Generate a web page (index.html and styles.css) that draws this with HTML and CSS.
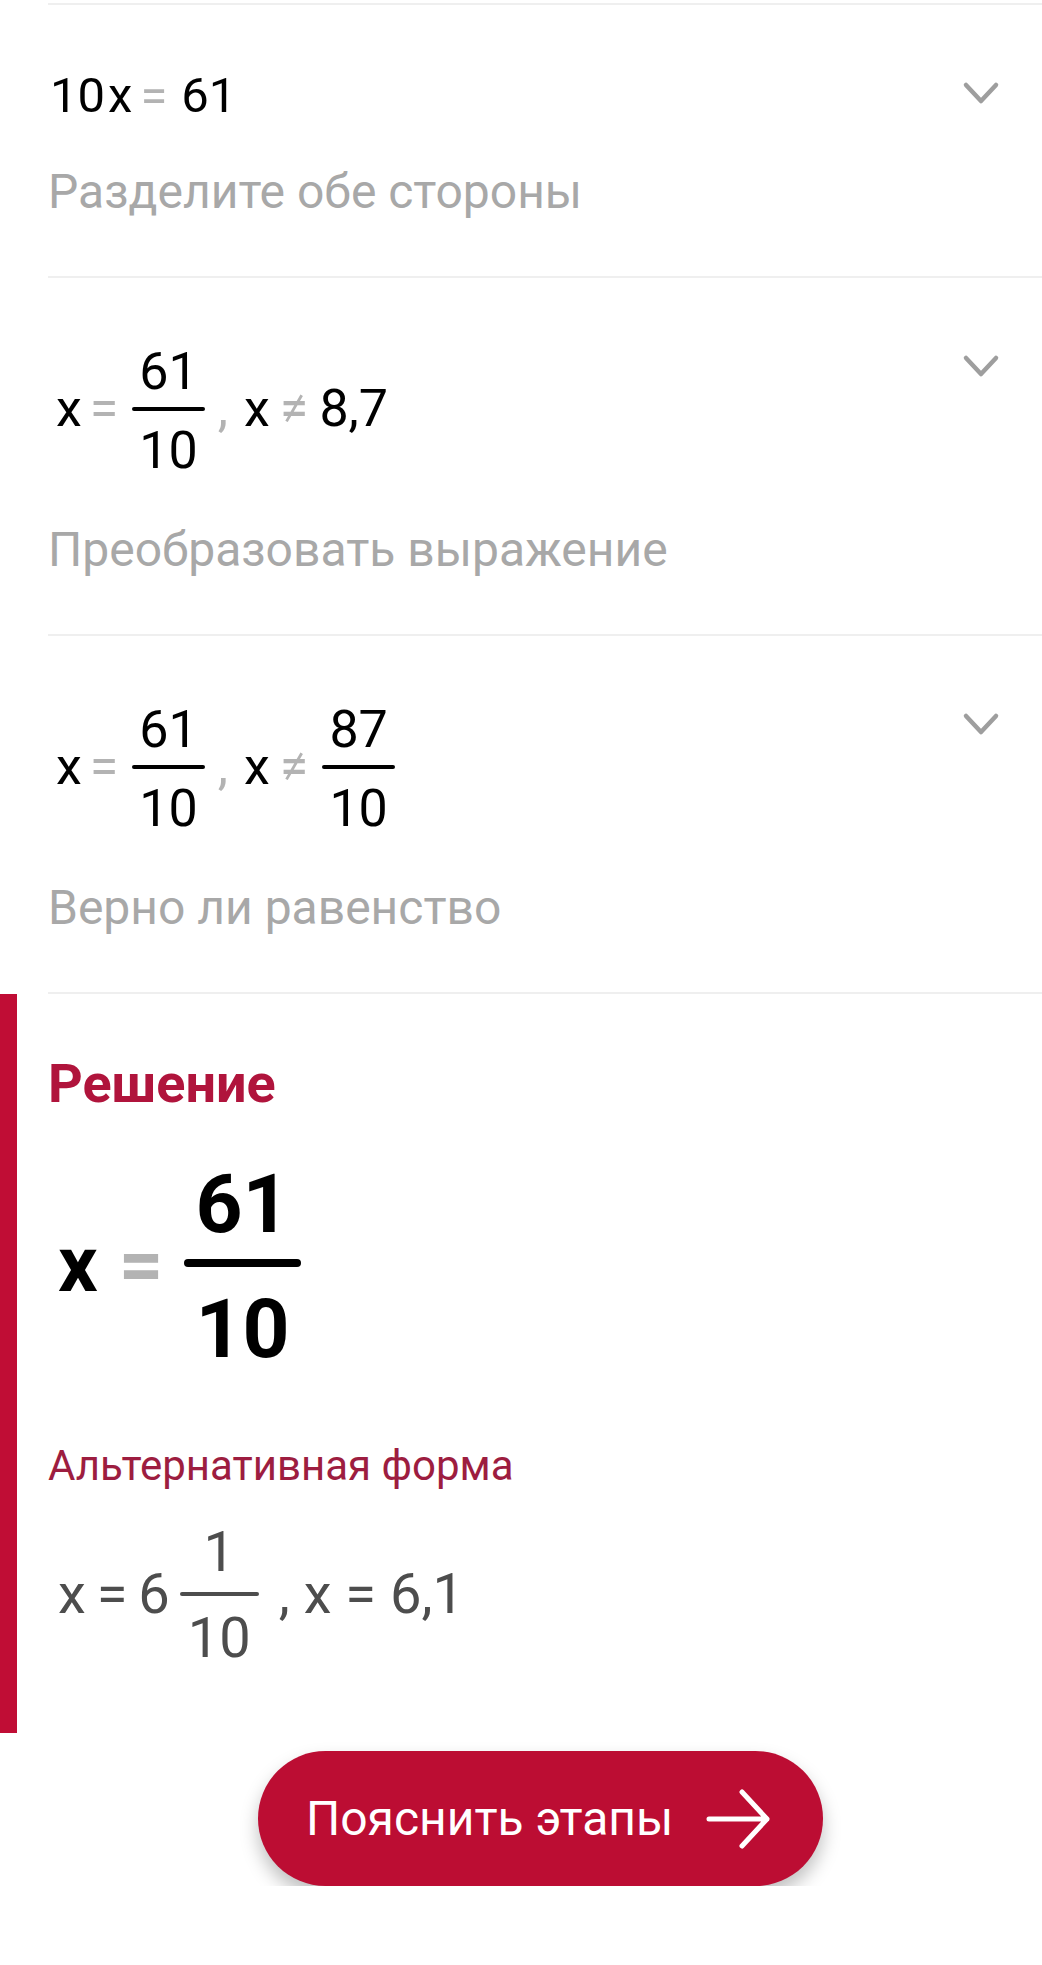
FILE: index.html
```html
<!DOCTYPE html>
<html lang="ru">
<head>
<meta charset="utf-8">
<title>Решение</title>
<link rel="stylesheet" href="styles.css">
</head>
<body>
<div class="page">
  <div class="steps">
    <div class="step">
      <div class="step-head">
        <div class="math math-line"><span class="n10">10</span><span class="var v1">x</span><span class="op op1">=</span><span class="r61">61</span></div>
        <svg class="chev" viewBox="0 0 40 24"><polyline points="6,4 21,20 36,4"/></svg>
      </div>
      <div class="step-label">Разделите обе стороны</div>
    </div>
    <div class="step">
      <div class="step-head">
        <div class="math"><span class="var">x</span><span class="op">=</span><span class="frac"><span class="num">61</span><span class="bar"></span><span class="den">10</span></span><span class="comma">,</span><span class="var v2">x</span><span class="op ne">≠</span><span class="dec">8,7</span></div>
        <svg class="chev" viewBox="0 0 40 24"><polyline points="6,4 21,20 36,4"/></svg>
      </div>
      <div class="step-label">Преобразовать выражение</div>
    </div>
    <div class="step">
      <div class="step-head">
        <div class="math"><span class="var">x</span><span class="op">=</span><span class="frac"><span class="num">61</span><span class="bar"></span><span class="den">10</span></span><span class="comma">,</span><span class="var v2">x</span><span class="op ne">≠</span><span class="frac frac2"><span class="num">87</span><span class="bar"></span><span class="den">10</span></span></div>
        <svg class="chev" viewBox="0 0 40 24"><polyline points="6,4 21,20 36,4"/></svg>
      </div>
      <div class="step-label">Верно ли равенство</div>
    </div>
  </div>

  <section class="solution">
    <h2 class="sol-title">Решение</h2>
    <div class="big-math"><span class="var">x</span><span class="big-op">=</span><span class="big-frac"><span class="big-num">61</span><span class="big-bar"></span><span class="big-den">10</span></span></div>
    <div class="alt-title">Альтернативная форма</div>
    <div class="alt-math"><span class="alt-lead">x = 6</span><span class="alt-frac"><span class="alt-num">1</span><span class="alt-bar"></span><span class="alt-den">10</span></span><span class="alt-rest">, x = 6,1</span></div>
  </section>

  <div class="btn-row">
    <button class="explain" type="button"><span class="explain-text">Пояснить этапы</span><svg class="arrow" viewBox="0 0 64 60"><path d="M3 30 H61 M36 3 L61 30 L36 57"/></svg></button>
  </div>
</div>
</body>
</html>
```

FILE: styles.css
```css
* { box-sizing: border-box; }

body {
  margin: 0;
  background: #ffffff;
  font-family: Roboto, "Noto Sans", "Liberation Sans", sans-serif;
}

.page {
  width: 1042px;
  padding-top: 3px;
}

/* ---------- steps ---------- */
.steps {
  margin-left: 48px;
  border-bottom: 2px solid #efefef;
}

.step {
  border-top: 2px solid #efefef;
  padding: 64px 0 56px;
}

.step-head {
  display: flex;
  justify-content: space-between;
  align-items: flex-start;
  padding-left: 8px;
  padding-right: 42px;
}

.math {
  font-size: 52px;
  line-height: 60px;
  color: #000;
  white-space: nowrap;
}

.math-line {
  font-size: 49px;
  line-height: 54px;
}

.n10 { margin-left: -6px; }
.v1 { margin-left: 3px; }
.op1 { margin: 0 8px 0 12px; }

.op {
  color: #b3b3b3;
  margin: 0 14px 0 8px;
}

.op.ne { margin: 0 0 0 10px; }

.dec { margin-left: 11px; }

.comma {
  color: #b3b3b3;
  margin-left: 13px;
}

.v2 { margin-left: 16px; }

.frac {
  display: inline-flex;
  flex-direction: column;
  align-items: stretch;
  text-align: center;
  vertical-align: 37px;
}

.frac2 { margin-left: 14px; }

.num {
  line-height: 60px;
  padding: 0 7px 5px;
}

.bar {
  height: 4px;
  background: #000;
  border-radius: 2px;
}

.den {
  line-height: 60px;
  padding: 10px 7px 0;
}

.chev {
  flex: none;
  width: 40px;
  height: 24px;
  margin-top: 12px;
  fill: none;
  stroke: #9e9e9e;
  stroke-width: 4.5;
  stroke-linecap: round;
  stroke-linejoin: round;
}

.step-label {
  font-size: 48px;
  line-height: 56px;
  color: #a8a8a8;
  margin-top: 41px;
}

/* ---------- solution ---------- */
.solution {
  border-left: 17px solid #c00d35;
  padding: 60px 0 65px 31px;
}

.sol-title {
  margin: 0;
  font-size: 54px;
  line-height: 60px;
  font-weight: 700;
  color: #b0143c;
}

.big-math {
  margin: 48px 0 0 10px;
  font-size: 78px;
  line-height: 80px;
  font-weight: 700;
  color: #000;
  white-space: nowrap;
}

.big-op {
  color: #b3b3b3;
  margin: 0 21px 0 21px;
}

.big-frac {
  display: inline-flex;
  flex-direction: column;
  align-items: stretch;
  text-align: center;
  vertical-align: 59px;
  font-size: 82px;
}

.big-num {
  line-height: 84px;
  padding: 0 11px 13px;
}

.big-bar {
  height: 8px;
  background: #000;
  border-radius: 4px;
}

.big-den {
  line-height: 84px;
  padding: 20px 11px 0;
}

.alt-title {
  margin-top: 71px;
  font-size: 42px;
  line-height: 48px;
  color: #9d1d40;
}

.alt-math {
  margin: 32px 0 0 10px;
  font-size: 56px;
  line-height: 60px;
  color: #4d4d4d;
  white-space: nowrap;
}

.alt-lead { word-spacing: -3px; }

.alt-frac {
  display: inline-flex;
  flex-direction: column;
  align-items: stretch;
  text-align: center;
  vertical-align: 42px;
  margin-left: 10px;
}

.alt-num {
  line-height: 60px;
  padding: 0 8px 10px;
}

.alt-bar {
  height: 4px;
  background: #4d4d4d;
  border-radius: 2px;
}

.alt-den {
  line-height: 60px;
  padding: 12px 8px 0;
}

.alt-rest { margin-left: 20px; }

/* ---------- button ---------- */
.btn-row {
  padding: 18px 0 0 258px;
}

.explain {
  display: flex;
  align-items: center;
  width: 565px;
  height: 135px;
  padding: 0 0 0 48px;
  border: none;
  border-radius: 68px;
  background: #bc0d33;
  color: #fff;
  font-family: Roboto, "Noto Sans", sans-serif;
  font-size: 48px;
  box-shadow: 0 10px 18px rgba(0, 0, 0, 0.25);
}

.explain-text { line-height: 56px; }

.arrow {
  width: 64px;
  height: 60px;
  margin-left: 33px;
  fill: none;
  stroke: #fff;
  stroke-width: 5;
  stroke-linecap: round;
  stroke-linejoin: round;
}
```
